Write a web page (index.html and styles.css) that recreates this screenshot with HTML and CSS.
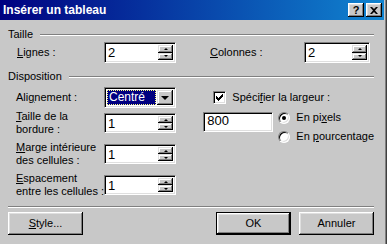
FILE: index.html
```html
<!DOCTYPE html>
<html lang="fr">
<head>
<meta charset="utf-8">
<title>Insérer un tableau</title>
<link rel="stylesheet" href="styles.css">
</head>
<body>
<div class="win">
  <div class="titlebar">
    <span class="title">Insérer un tableau</span>
    <div class="capbtns">
      <span class="capbtn help">?</span>
      <span class="capbtn close"><svg width="8" height="7" viewBox="0 0 8 7"><path d="M0 0h2l2 2 2-2h2L5 3.5 8 7H6L4 5 2 7H0l3-3.5z" fill="#000"/></svg></span>
    </div>
  </div>
  <div class="content">
    <div class="grouphead"><span>Taille</span><div class="etch"></div></div>
    <div class="taille-row">
      <span class="lbl lbl-lignes"><u>L</u>ignes :</span>
      <div class="spin spin-lignes"><span class="val">2</span><div class="updown"><span class="ud up"><i></i></span><span class="ud dn"><i></i></span></div></div>
      <span class="lbl lbl-colonnes"><u>C</u>olonnes :</span>
      <div class="spin spin-colonnes"><span class="val">2</span><div class="updown"><span class="ud up"><i></i></span><span class="ud dn"><i></i></span></div></div>
    </div>
    <div class="grouphead disp-head"><span>Disposition</span><div class="etch"></div></div>
    <div class="disp">
      <div class="dleft">
        <div class="frow row-align">
          <span class="lbl">Ali<u>g</u>nement :</span>
          <div class="combo"><span class="sel">Centré</span><span class="dropbtn"><i></i></span></div>
        </div>
        <div class="frow row2">
          <span class="lbl"><u>T</u>aille de la<br>bordure :</span>
          <div class="spin spin-left"><span class="val">1</span><div class="updown"><span class="ud up"><i></i></span><span class="ud dn"><i></i></span></div></div>
        </div>
        <div class="frow row2">
          <span class="lbl"><u>M</u>arge intérieure<br>des cellules :</span>
          <div class="spin spin-left"><span class="val">1</span><div class="updown"><span class="ud up"><i></i></span><span class="ud dn"><i></i></span></div></div>
        </div>
        <div class="frow row2">
          <span class="lbl"><u>E</u>spacement<br>entre les cellules :</span>
          <div class="spin spin-left"><span class="val">1</span><div class="updown"><span class="ud up"><i></i></span><span class="ud dn"><i></i></span></div></div>
        </div>
      </div>
      <div class="dright">
        <div class="checkrow">
          <span class="checkbox"><svg width="7" height="7" viewBox="0 0 7 7"><path d="M0 2h1v1h1v1h1V3h1V2h1V1h1V0h1v3H6v1H5v1H4v1H3v1H2V6H1V5H0z" fill="#000"/></svg></span>
          <span class="lbl">Spéci<u>f</u>ier la largeur :</span>
        </div>
        <div class="widthrow">
          <div class="field w800">800</div>
          <div class="radios">
            <div class="radiorow"><span class="radio on"></span><span class="lbl">En pi<u>x</u>els</span></div>
            <div class="radiorow"><span class="radio"></span><span class="lbl">En <u>p</u>ourcentage</span></div>
          </div>
        </div>
      </div>
    </div>
    <div class="sep"></div>
    <div class="btnrow">
      <span class="btn"><span><u>S</u>tyle...</span></span>
      <span class="spacer"></span>
      <span class="btn default"><span>OK</span></span>
      <span class="btn"><span>Annuler</span></span>
    </div>
  </div>
</div>
</body>
</html>
```

FILE: styles.css
```css
* { box-sizing: border-box; }
html, body { margin: 0; padding: 0; }
body {
  width: 387px;
  height: 244px;
  overflow: hidden;
  background: #c8c8c8;
  font-family: "Liberation Sans", Arial, sans-serif;
  font-size: 11px;
  color: #000;
}
u { text-decoration: underline; text-underline-offset: 1px; }

.win {
  width: 387px;
  height: 244px;
  background: #c8c8c8;
  border-right: 1px solid #404040;
  box-shadow: inset -1px 0 0 #808080;
  padding-right: 2px;
}

.titlebar {
  height: 20px;
  background: linear-gradient(to right, #000080, #1084d0);
  display: flex;
  align-items: center;
  justify-content: space-between;
  padding: 0 2px 0 3px;
}
.title {
  color: #fff;
  font-weight: bold;
  font-size: 12px;
  line-height: 14px;
}
.capbtns { display: flex; gap: 2px; }
.capbtn {
  width: 16px;
  height: 14px;
  background: #c8c8c8;
  box-shadow: inset -1px -1px 0 #000, inset 1px 1px 0 #fff, inset -2px -2px 0 #808080, inset 2px 2px 0 #dfdfdf;
  display: flex;
  align-items: center;
  justify-content: center;
  font-weight: bold;
  font-size: 11px;
  line-height: 14px;
}

.content { padding: 8px 10px 0 8px; }

.grouphead {
  display: flex;
  align-items: center;
  height: 13px;
  line-height: 13px;
  gap: 7px;
}
.etch {
  flex: 1;
  height: 2px;
  border-top: 1px solid #808080;
  border-bottom: 1px solid #fff;
}
.disp-head { margin-top: 7px; }

.lbl { line-height: 13px; white-space: nowrap; }

.spin, .combo, .field {
  background: #fff;
  border: 1px solid;
  border-color: #808080 #fff #fff #808080;
  box-shadow: inset 1px 1px 0 #000, inset -1px -1px 0 #dfdfdf;
}

.taille-row {
  display: flex;
  align-items: center;
  height: 21px;
  margin-top: 1px;
  padding-left: 9px;
}
.lbl-lignes { width: 87px; }
.lbl-colonnes { margin-left: 34px; width: 94px; }

.spin {
  height: 21px;
  display: flex;
  padding: 2px;
  align-items: stretch;
}
.spin-lignes { width: 72px; }
.spin-colonnes { width: 66px; }
.spin-left { width: 72px; height: 20px; }
.spin .val {
  flex: 1;
  font-size: 13px;
  line-height: 15px;
  padding-left: 1px;
}
.updown {
  width: 15px;
  display: flex;
  flex-direction: column;
}
.ud {
  flex: 1;
  background: #c8c8c8;
  box-shadow: inset -1px -1px 0 #000, inset 1px 1px 0 #dfdfdf, inset -2px -2px 0 #808080, inset 2px 2px 0 #fff;
  display: flex;
  align-items: center;
  justify-content: center;
}
.ud i {
  width: 0; height: 0;
  border-left: 2px solid transparent;
  border-right: 2px solid transparent;
}
.ud.up i { border-bottom: 2px solid #000; }
.ud.dn i { border-top: 2px solid #000; }

.disp {
  display: flex;
  margin-top: 4px;
}
.dleft {
  width: 199px;
  display: flex;
  flex-direction: column;
}
.frow {
  display: flex;
  align-items: center;
  padding-left: 8px;
}
.frow .lbl { width: 88px; }
.row-align { height: 21px; }
.row2 { height: 26px; margin-top: 5px; }
.row-align + .row2 { margin-top: 2px; }

.combo {
  width: 72px;
  height: 21px;
  padding: 2px;
  display: flex;
  align-items: stretch;
}
.combo .sel {
  flex: 1;
  background: #000080;
  color: #fff;
  outline: 1px dotted #ffff80;
  outline-offset: -1px;
  font-size: 12px;
  line-height: 15px;
  padding-left: 2px;
  margin-right: 1px;
}
.dropbtn {
  width: 16px;
  background: #c8c8c8;
  box-shadow: inset -1px -1px 0 #000, inset 1px 1px 0 #dfdfdf, inset -2px -2px 0 #808080, inset 2px 2px 0 #fff;
  display: flex;
  align-items: center;
  justify-content: center;
}
.dropbtn i {
  width: 0; height: 0;
  border-left: 4px solid transparent;
  border-right: 4px solid transparent;
  border-top: 4px solid #000;
}

.dright {
  display: flex;
  flex-direction: column;
}
.checkrow {
  display: flex;
  align-items: center;
  gap: 6px;
  margin-left: 10px;
  margin-top: 4px;
  height: 13px;
}
.checkbox {
  width: 13px;
  height: 13px;
  background: #fff;
  border: 1px solid;
  border-color: #808080 #fff #fff #808080;
  box-shadow: inset 1px 1px 0 #000, inset -1px -1px 0 #dfdfdf;
  display: flex;
  align-items: center;
  justify-content: center;
}
.widthrow {
  display: flex;
  margin-top: 8px;
}
.field {
  width: 70px;
  height: 20px;
  font-size: 13px;
  line-height: 16px;
  padding-left: 3px;
}
.radios {
  margin-left: 5px;
  margin-top: -3px;
  display: flex;
  flex-direction: column;
}
.radiorow {
  display: flex;
  align-items: center;
  height: 17px;
  gap: 6px;
}
.radiorow + .radiorow { margin-top: 2px; }
.radio {
  width: 12px;
  height: 12px;
  border-radius: 50%;
  background: #fff;
  border: 1px solid;
  border-color: #808080 #fff #fff #808080;
  box-shadow: inset 1px 1px 0 #000, inset -1px -1px 0 #dfdfdf;
  display: flex;
  align-items: center;
  justify-content: center;
}
.radio.on::after {
  content: "";
  width: 4px;
  height: 4px;
  border-radius: 50%;
  background: #000;
}

.sep {
  height: 2px;
  border-top: 1px solid #808080;
  border-bottom: 1px solid #fff;
  margin-top: 8px;
}

.btnrow {
  display: flex;
  margin-top: 4px;
  gap: 8px;
}
.spacer { flex: 1; }
.btn {
  width: 75px;
  height: 23px;
  background: #c8c8c8;
  box-shadow: inset -1px -1px 0 #000, inset 1px 1px 0 #fff, inset -2px -2px 0 #808080, inset 2px 2px 0 #dfdfdf;
  display: flex;
  align-items: center;
  justify-content: center;
  line-height: 13px;
}
.btn.default {
  border: 1px solid #000;
}
.btn.default > span { margin-top: -1px; }
```
